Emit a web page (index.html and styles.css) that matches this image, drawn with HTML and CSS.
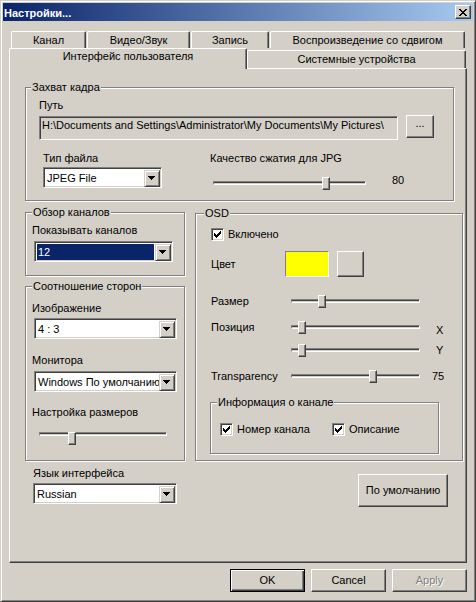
FILE: index.html
```html
<!DOCTYPE html>
<html lang="ru">
<head>
<meta charset="utf-8">
<title>Настройки...</title>
<link rel="stylesheet" href="styles.css">
</head>
<body>
<div class="window">
  <div class="titlebar">
    <span class="title">Настройки...</span>
    <div class="close-btn">
      <svg width="8" height="7" viewBox="0 0 8 7" shape-rendering="crispEdges"><path d="M0 0h2v1H0zM6 0h2v1H6zM1 1h2v1H1zM5 1h2v1H5zM2 2h4v1H2zM3 3h2v1H3zM2 4h4v1H2zM1 5h2v1H1zM5 5h2v1H5zM0 6h2v1H0zM6 6h2v1H6z"/></svg>
    </div>
  </div>

  <div class="tabs">
    <div class="tabrow back">
      <div class="tab t-channel">Канал</div>
      <div class="tab t-video">Видео/Звук</div>
      <div class="tab t-record">Запись</div>
      <div class="tab t-timeshift">Воспроизведение со сдвигом</div>
    </div>
    <div class="tabrow front">
      <div class="tab selected t-ui">Интерфейс пользователя</div>
      <div class="tab t-devices">Системные устройства</div>
    </div>
  </div>

  <div class="panel">
    <fieldset class="group capture">
      <legend>Захват кадра</legend>
      <div class="label path-label">Путь</div>
      <div class="path-row">
        <div class="edit disabled">H:\Documents and Settings\Administrator\My Documents\My Pictures\</div>
        <div class="btn browse">...</div>
      </div>
      <div class="capture-row">
        <div class="col-type">
          <div class="label">Тип файла</div>
          <div class="combo combo-type">
            <span class="combo-text">JPEG File</span>
            <span class="combo-btn"><svg width="7" height="4" viewBox="0 0 7 4" shape-rendering="crispEdges"><path d="M0 0h7v1H0zM1 1h5v1H1zM2 2h3v1H2zM3 3h1v1H3z"/></svg></span>
          </div>
        </div>
        <div class="col-quality">
          <div class="label">Качество сжатия для JPG</div>
          <div class="slider-row">
            <div class="slider s-quality"><div class="track"></div><div class="thumb" style="left:109px"></div></div>
            <span class="value v-quality">80</span>
          </div>
        </div>
      </div>
    </fieldset>

    <div class="mid">
      <div class="leftcol">
        <fieldset class="group channels">
          <legend>Обзор каналов</legend>
          <div class="label g-label">Показывать каналов</div>
          <div class="combo combo-channels focused">
            <span class="combo-text">12</span>
            <span class="combo-btn"><svg width="7" height="4" viewBox="0 0 7 4" shape-rendering="crispEdges"><path d="M0 0h7v1H0zM1 1h5v1H1zM2 2h3v1H2zM3 3h1v1H3z"/></svg></span>
          </div>
        </fieldset>

        <fieldset class="group aspect">
          <legend>Соотношение сторон</legend>
          <div class="label g-label">Изображение</div>
          <div class="combo combo-aspect">
            <span class="combo-text">4 : 3</span>
            <span class="combo-btn"><svg width="7" height="4" viewBox="0 0 7 4" shape-rendering="crispEdges"><path d="M0 0h7v1H0zM1 1h5v1H1zM2 2h3v1H2zM3 3h1v1H3z"/></svg></span>
          </div>
          <div class="label g-label l-monitor">Монитора</div>
          <div class="combo combo-aspect c-monitor">
            <span class="combo-text">Windows По умолчанию</span>
            <span class="combo-btn"><svg width="7" height="4" viewBox="0 0 7 4" shape-rendering="crispEdges"><path d="M0 0h7v1H0zM1 1h5v1H1zM2 2h3v1H2zM3 3h1v1H3z"/></svg></span>
          </div>
          <div class="label g-label l-size">Настройка размеров</div>
          <div class="slider s-size"><div class="track"></div><div class="thumb" style="left:29px"></div></div>
        </fieldset>
      </div>

      <fieldset class="group osd">
        <legend>OSD</legend>
        <div class="check-row osd-enabled">
          <span class="checkbox"><svg width="7" height="7" viewBox="0 0 7 7" shape-rendering="crispEdges"><path d="M6 0h1v1H6zM5 1h2v1H5zM0 2h1v1H0zM4 2h3v1H4zM0 3h2v1H0zM3 3h3v1H3zM0 4h5v1H0zM1 5h3v1H1zM2 6h1v1H2z"/></svg></span>
          <span class="check-label">Включено</span>
        </div>
        <div class="osd-row color-row">
          <span class="osd-label color-label">Цвет</span>
          <span class="swatch"></span>
          <span class="btn color-btn"></span>
        </div>
        <div class="osd-row r-size">
          <span class="osd-label">Размер</span>
          <div class="slider s-osd"><div class="track"></div><div class="thumb" style="left:27px"></div></div>
        </div>
        <div class="osd-row r-pos">
          <span class="osd-label">Позиция</span>
          <div class="slider s-osd"><div class="track"></div><div class="thumb" style="left:7px"></div></div>
          <span class="axis axis-x">X</span>
        </div>
        <div class="osd-row r-posy">
          <span class="osd-label"></span>
          <div class="slider s-osd"><div class="track"></div><div class="thumb" style="left:7px"></div></div>
          <span class="axis axis-y">Y</span>
        </div>
        <div class="osd-row r-trans">
          <span class="osd-label">Transparency</span>
          <div class="slider s-osd"><div class="track"></div><div class="thumb" style="left:78px"></div></div>
          <span class="value v-trans">75</span>
        </div>

        <fieldset class="group info">
          <legend>Информация о канале</legend>
          <div class="info-row">
            <div class="check-row chk-number">
              <span class="checkbox"><svg width="7" height="7" viewBox="0 0 7 7" shape-rendering="crispEdges"><path d="M6 0h1v1H6zM5 1h2v1H5zM0 2h1v1H0zM4 2h3v1H4zM0 3h2v1H0zM3 3h3v1H3zM0 4h5v1H0zM1 5h3v1H1zM2 6h1v1H2z"/></svg></span>
              <span class="check-label">Номер канала</span>
            </div>
            <div class="check-row">
              <span class="checkbox"><svg width="7" height="7" viewBox="0 0 7 7" shape-rendering="crispEdges"><path d="M6 0h1v1H6zM5 1h2v1H5zM0 2h1v1H0zM4 2h3v1H4zM0 3h2v1H0zM3 3h3v1H3zM0 4h5v1H0zM1 5h3v1H1zM2 6h1v1H2z"/></svg></span>
              <span class="check-label">Описание</span>
            </div>
          </div>
        </fieldset>
      </fieldset>
    </div>

    <div class="bottom-row">
      <div class="lang">
        <div class="label">Язык интерфейса</div>
        <div class="combo combo-lang">
          <span class="combo-text">Russian</span>
          <span class="combo-btn"><svg width="7" height="4" viewBox="0 0 7 4" shape-rendering="crispEdges"><path d="M0 0h7v1H0zM1 1h5v1H1zM2 2h3v1H2zM3 3h1v1H3z"/></svg></span>
        </div>
      </div>
      <div class="btn defaults">По умолчанию</div>
    </div>
  </div>

  <div class="buttons">
    <div class="btn dlg-btn default">OK</div>
    <div class="btn dlg-btn">Cancel</div>
    <div class="btn dlg-btn disabled-btn">Apply</div>
  </div>
</div>
</body>
</html>
```

FILE: styles.css
```css
* { box-sizing: border-box; }

html, body {
  margin: 0;
  padding: 0;
}

body {
  width: 476px;
  height: 602px;
  background: #d4d0c8;
  font-family: "Liberation Sans", Arial, sans-serif;
  font-size: 11px;
  line-height: 13px;
  color: #000;
  overflow: hidden;
}

.window {
  width: 476px;
  height: 602px;
  background: #d4d0c8;
  border: 1px solid;
  border-color: #d4d0c8 #404040 #404040 #d4d0c8;
  box-shadow: inset 1px 1px #fff, inset -1px -1px #808080;
  padding: 2px;
  display: flex;
  flex-direction: column;
}

/* title bar */
.titlebar {
  height: 18px;
  flex: none;
  display: flex;
  align-items: flex-start;
  justify-content: space-between;
  background: linear-gradient(to right, #0a246a, #a6caf0);
  padding: 0 2px 0 1px;
}

.title {
  color: #fff;
  font-weight: bold;
  padding-top: 4px;
  white-space: nowrap;
}

.close-btn {
  margin-top: 2px;
  width: 16px;
  height: 14px;
  background: #d4d0c8;
  border: 1px solid;
  border-color: #fff #404040 #404040 #fff;
  box-shadow: inset -1px -1px #808080;
  display: flex;
  align-items: center;
  justify-content: center;
}

.close-btn svg { display: block; }

/* tabs */
.tabs {
  margin: 10px 0 0 6px;
  flex: none;
}

.tabrow { display: flex; }

.tabrow.back {
  margin-left: 2px;
  gap: 1px;
  height: 17px;
}

.tabrow.front {
  height: 20px;
  align-items: flex-start;
}

.tab {
  background: #d4d0c8;
  border-top: 1px solid #fff;
  border-left: 1px solid #fff;
  border-right: 1px solid #404040;
  box-shadow: inset -1px 0 #808080;
  border-radius: 2px 2px 0 0;
  text-align: center;
  white-space: nowrap;
  padding-top: 2px;
  height: 17px;
}

.t-channel { width: 75px; }
.t-video { width: 103px; }
.t-record { width: 78px; }
.t-timeshift { width: 195px; }

.tab.selected {
  width: 238px;
  height: 21px;
  padding-top: 1px;
  position: relative;
  z-index: 1;
}

.t-devices {
  width: 219px;
  height: 18px;
  margin-top: 2px;
}

/* panel */
.panel {
  flex: none;
  margin-left: 6px;
  width: 458px;
  height: 495px;
  border: 1px solid;
  border-color: #fff #404040 #404040 #fff;
  box-shadow: inset -1px -1px #808080;
  padding: 12px 0 0 15px;
}

/* group boxes */
.group {
  margin: 0;
  padding: 0;
  min-width: 0;
  border: 1px solid #808080;
  box-shadow: inset 1px 1px #fff, 1px 1px #fff;
}

.group > legend {
  padding: 0 1px;
  margin-left: 6px;
  background: #d4d0c8;
  line-height: 13px;
  white-space: nowrap;
}

.label { white-space: nowrap; }

/* capture */
.capture {
  width: 429px;
  padding: 5px 0 12px 0;
}

.capture > legend { margin-left: 5px; }

.path-label { margin-left: 13px; }

.path-row {
  display: flex;
  align-items: flex-start;
  margin: 4px 0 0 13px;
}

.edit {
  width: 359px;
  height: 24px;
  border: 1px solid;
  border-color: #808080 #fff #fff #808080;
  box-shadow: inset 1px 1px #404040, inset -1px -1px #d4d0c8;
  padding: 2px 0 0 2px;
  white-space: nowrap;
  overflow: hidden;
}

.edit.disabled { background: #d4d0c8; }

.btn {
  background: #d4d0c8;
  border: 1px solid;
  border-color: #fff #404040 #404040 #fff;
  box-shadow: inset -1px -1px #808080;
  display: flex;
  align-items: center;
  justify-content: center;
  white-space: nowrap;
}

.browse {
  width: 28px;
  height: 23px;
  margin: -1px 0 0 8px;
  align-items: flex-start;
  padding-top: 1px;
}

.capture-row {
  display: flex;
  align-items: flex-start;
  margin: 12px 0 0 17px;
}

.col-type { width: 119px; }

.combo-type {
  width: 119px;
  margin-top: 2px;
}

.col-quality { margin-left: 48px; }

.slider-row {
  display: flex;
  align-items: flex-start;
  margin: 12px 0 -2px 3px;
}

.s-quality { width: 153px; }

.v-quality { margin: -3px 0 0 26px; }

/* combo */
.combo {
  height: 21px;
  display: flex;
  background: #fff;
  border: 1px solid;
  border-color: #808080 #fff #fff #808080;
  box-shadow: inset 1px 1px #404040, inset -1px -1px #d4d0c8;
  padding: 2px 1px 1px 2px;
}

.combo-text {
  flex: 1;
  min-width: 0;
  padding: 2px 0 0 1px;
  white-space: nowrap;
  overflow: hidden;
}

.combo.focused .combo-text {
  background: #0a246a;
  color: #fff;
  margin-right: 1px;
}

.combo-btn {
  flex: none;
  width: 16px;
  height: 17px;
  background: #d4d0c8;
  border: 1px solid;
  border-color: #d4d0c8 #404040 #404040 #d4d0c8;
  box-shadow: inset 1px 1px #fff, inset -1px -1px #808080;
  padding: 5px 0 0 3px;
}

.combo-btn svg { display: block; }

/* slider */
.slider {
  position: relative;
  height: 13px;
  flex: none;
}

.track {
  margin-top: 4px;
  height: 4px;
  border: 1px solid;
  border-color: #808080 #fff #fff #808080;
  box-shadow: inset 0 1px #404040;
}

.thumb {
  position: absolute;
  top: 0;
  width: 8px;
  height: 13px;
  background: #d4d0c8;
  border: 1px solid;
  border-color: #fff #404040 #404040 #fff;
  box-shadow: inset -1px -1px #808080;
}

/* middle */
.mid {
  display: flex;
  gap: 10px;
  margin-top: 5px;
  align-items: flex-start;
}

.leftcol { width: 160px; }

.channels {
  padding: 5px 0 13px 0;
}

.g-label { margin-left: 6px; }

.combo-channels {
  width: 139px;
  margin: 4px 0 0 8px;
}

.aspect {
  margin-top: 4px;
  padding: 9px 0 15px 0;
}

.combo-aspect {
  width: 143px;
  margin: 3px 0 0 8px;
}

.l-monitor { margin-top: 15px; }
.c-monitor { margin-top: 4px; }
.l-size { margin-top: 14px; }

.s-size {
  width: 128px;
  margin: 13px 0 0 13px;
}

/* OSD */
.osd {
  width: 268px;
  margin-top: 1px;
  padding: 8px 0 6px 0;
}

.osd > legend { margin-left: 8px; }

.check-row {
  display: flex;
  align-items: center;
  gap: 4px;
  height: 13px;
}

.osd-enabled { margin-left: 15px; }

.checkbox {
  flex: none;
  width: 13px;
  height: 13px;
  background: #fff;
  border: 1px solid;
  border-color: #808080 #fff #fff #808080;
  box-shadow: inset 1px 1px #404040, inset -1px -1px #d4d0c8;
  padding: 2px 0 0 2px;
}

.checkbox svg { display: block; }

.check-label { white-space: nowrap; }

.osd-row {
  display: flex;
  align-items: flex-start;
  margin-left: 15px;
}

.osd-label {
  flex: none;
  width: 80px;
  white-space: nowrap;
}

.color-row {
  margin-top: 10px;
  align-items: center;
}

.color-label { width: 74px; }

.swatch {
  width: 44px;
  height: 26px;
  background: #ffff00;
  border: 1px solid;
  border-color: #808080 #fff #fff #808080;
}

.color-btn {
  width: 27px;
  height: 26px;
  margin-left: 8px;
}

.r-size { margin-top: 18px; }
.r-pos { margin-top: 13px; }
.r-posy { margin-top: 10px; }
.r-trans { margin-top: 13px; }

.s-osd { width: 129px; }

.axis { margin-left: 16px; }
.axis-x { margin: 3px 0 -3px 16px; }

.v-trans { margin-left: 12px; }

.info {
  width: 229px;
  margin: 13px 0 0 14px;
  padding: 14px 0 17px 0;
}

.info-row {
  display: flex;
  margin-left: 9px;
}

.chk-number { width: 112px; }

/* bottom */
.bottom-row {
  display: flex;
  justify-content: space-between;
  align-items: flex-start;
  margin-top: 6px;
}

.lang { margin-left: 8px; }

.combo-lang {
  width: 144px;
  margin-top: 3px;
}

.defaults {
  width: 90px;
  height: 33px;
  margin: 7px 18px 0 0;
}

/* dialog buttons */
.buttons {
  flex: none;
  display: flex;
  justify-content: flex-end;
  gap: 6px;
  margin: 6px 6px 0 0;
}

.dlg-btn {
  width: 75px;
  height: 23px;
}

.dlg-btn.default {
  border-color: #000;
  box-shadow: inset 1px 1px #fff, inset -1px -1px #404040, inset -2px -2px #808080;
}

.disabled-btn {
  color: #808080;
  text-shadow: 1px 1px #fff;
}
```
